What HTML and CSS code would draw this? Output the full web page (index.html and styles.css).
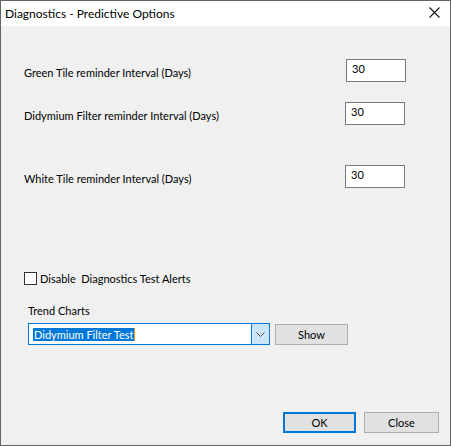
FILE: index.html
```html
<!DOCTYPE html>
<html lang="en">
<head>
  <meta charset="UTF-8">
  <title>Diagnostics - Predictive Options</title>
  <link rel="stylesheet" href="styles.css">
</head>
<body>

<!-- Dialog window -->
<div class="window">
  <div class="titlebar">
    <span class="title">Diagnostics - Predictive Options</span>
    <svg class="close-x" width="11" height="11" viewBox="0 0 11 11">
      <path d="M0.5 0.5 L10.5 10.5 M10.5 0.5 L0.5 10.5" stroke="#111" stroke-width="1.1" fill="none"/>
    </svg>
  </div>

  <div class="content">
    <div class="row row-green">
      <span class="label">Green Tile reminder Interval (Days)</span>
      <div class="field field-green">30</div>
    </div>
    <div class="row row-didy">
      <span class="label">Didymium Filter reminder Interval (Days)</span>
      <div class="field">30</div>
    </div>
    <div class="row row-white">
      <span class="label">White Tile reminder Interval (Days)</span>
      <div class="field">30</div>
    </div>

    <div class="check-row">
      <span class="checkbox"></span>
      <span>Disable&nbsp; Diagnostics Test Alerts</span>
    </div>

    <div class="trend-label">Trend Charts</div>
    <div class="trend-row">
      <div class="combo">
        <div class="combo-text"><span class="selected">Didymium Filter Test</span></div>
        <div class="combo-btn">
          <svg width="9" height="5" viewBox="0 0 9 5">
            <path d="M0.5 0.5 L4.5 4.5 L8.5 0.5" stroke="#4d4d4d" stroke-width="1" fill="none"/>
          </svg>
        </div>
      </div>
      <div class="btn btn-show">Show</div>
    </div>

    <div class="footer">
      <div class="btn btn-ok">OK</div>
      <div class="btn btn-close">Close</div>
    </div>
  </div>
</div>

</body>
</html>
```

FILE: styles.css
```css
/* Window colours */
:root {
  --frame: #646464;
  --face: #f0f0f0;
  --text: #000;
  --field-border: #7a7a7a;
  --btn-face: #e1e1e1;
  --btn-border: #adadad;
  --accent: #0078d7;
  --accent-light: #cce4f7;
}
html, body {
  margin: 0;
  padding: 0;
  background: var(--face);
}
body {
  font-family: Lato, "Noto Sans", sans-serif;
  font-size: 11px;
  color: var(--text);
}

.window {
  width: 451px;
  height: 446px;
  box-sizing: border-box;
  border: 1px solid var(--frame);
  display: flex;
  flex-direction: column;
  background: var(--face);
}

/* Title bar */
.titlebar {
  height: 25px;
  background: #fff;
  display: flex;
  align-items: center;
  justify-content: space-between;
  padding: 0 10px 0 4px;
}
.title {
  font-size: 12px;
  margin-top: -1px;
}
.close-x {
  margin-top: -3px;
}

/* Content */
.content {
  flex: 1;
  display: flex;
  flex-direction: column;
  padding: 0 45px 0 23px;
}
.row {
  display: flex;
  align-items: center;
  justify-content: space-between;
  height: 23px;
}
.row-green { margin-top: 33px; }
.row-didy  { margin-top: 20px; }
.row-white { margin-top: 40px; }
.row .label {
  padding-top: 4px;
}
.field {
  width: 60px;
  height: 23px;
  box-sizing: border-box;
  border: 1px solid var(--field-border);
  background: #fff;
  padding: 1px 5px;
  line-height: 16px;
}
.field-green {
  margin-right: -1px;
}

/* Checkbox */
.check-row {
  display: flex;
  align-items: center;
  gap: 3px;
  margin-top: 84px;
  height: 13px;
}
.checkbox {
  width: 13px;
  height: 13px;
  box-sizing: border-box;
  border: 1px solid #333;
  background: #fff;
}

/* Trend charts */
.trend-label {
  margin: 18px 0 0 4px;
  line-height: 15px;
}
.trend-row {
  display: flex;
  align-items: center;
  margin: 5px 0 0 4px;
  gap: 5px;
}
.combo {
  width: 242px;
  height: 22px;
  box-sizing: border-box;
  border: 1px solid var(--accent);
  background: #fff;
  display: flex;
}
.combo-text {
  flex: 1;
  display: flex;
  align-items: center;
  padding-left: 4px;
}
.selected {
  background: var(--accent);
  color: #fff;
  line-height: 13px;
  padding: 0 0 0 1px;
  border-right: 1px solid #f7931e;
}
.combo-btn {
  width: 17px;
  border-left: 1px solid var(--accent);
  background: var(--accent-light);
  display: flex;
  align-items: center;
  justify-content: center;
}

/* Buttons */
.btn {
  box-sizing: border-box;
  height: 21px;
  background: var(--btn-face);
  border: 1px solid var(--btn-border);
  display: flex;
  align-items: center;
  justify-content: center;
}
.btn-show {
  width: 73px;
}
.footer {
  display: flex;
  justify-content: flex-end;
  gap: 8px;
  margin: auto -34px 12px 0;
}
.btn-ok {
  width: 73px;
  border: 2px solid var(--accent);
}
.btn-close {
  width: 75px;
}
```
